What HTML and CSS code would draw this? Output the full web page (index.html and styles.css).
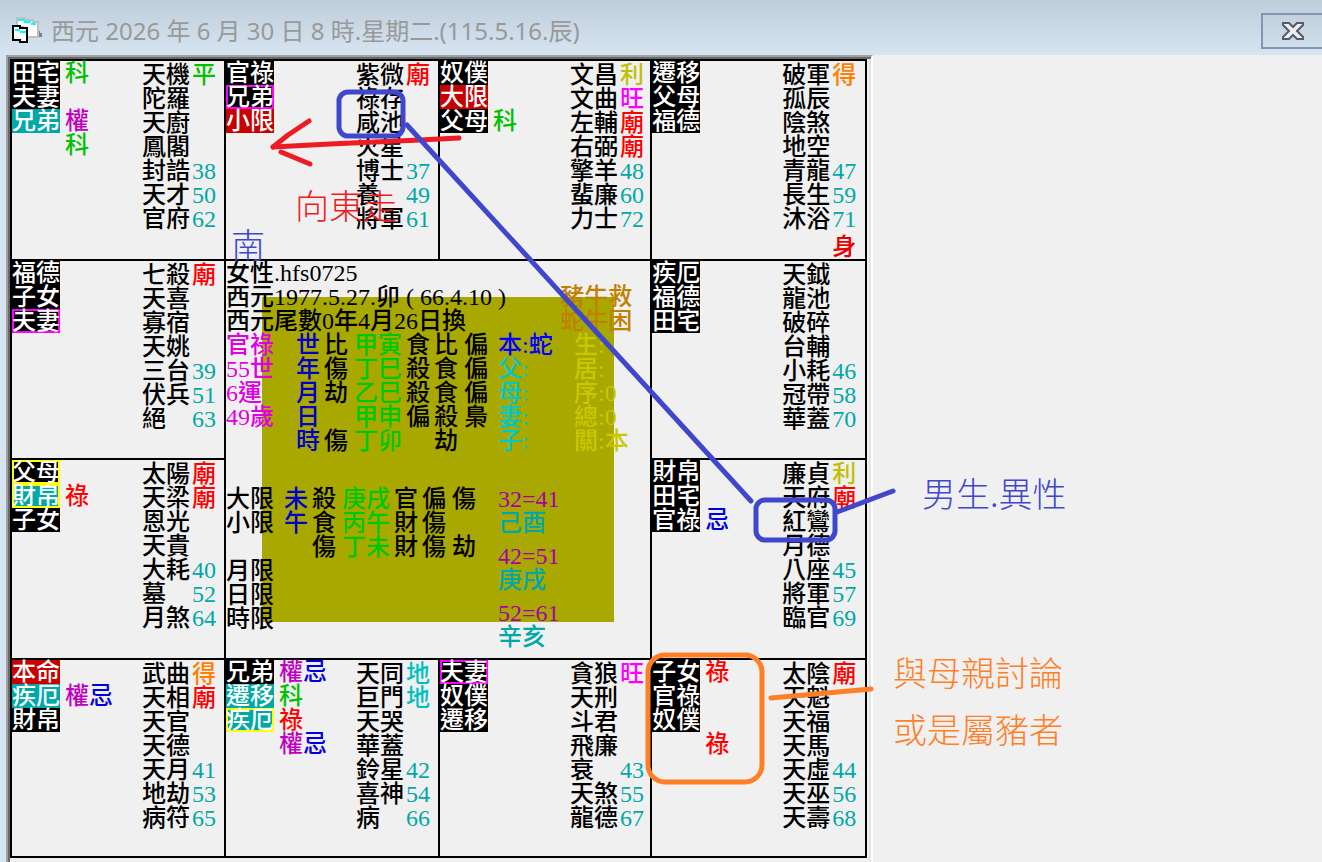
FILE: index.html
```
<!DOCTYPE html>
<html lang="zh-Hant">
<head>
  <meta charset="UTF-8">
  <title>西元 2026 年 6 月 30 日 8 時</title>
  <link rel="stylesheet" href="styles.css">
</head>
<body>

  <header class="titlebar">
    <svg class="app-icon" width="32" height="28" viewBox="0 0 32 28" shape-rendering="crispEdges">
      <path d="M26 14h3v2h2v4h-5z" fill="#808080"/>
      <path d="M6 1h8v2h8v2h5v15H12V10H6z" fill="#fff" stroke="#c0c0c0" stroke-width="2"/>
      <path d="M7 3h6M13 5h7M20 7h5" stroke="#00ffff" stroke-width="2"/>
      <path d="M2 9h7v2h7v14H9v-2H2z" fill="#fff" stroke="#000" stroke-width="2"/>
      <path d="M4 13h5M9 15h6" stroke="#00ffff" stroke-width="2"/>
    </svg>
    <h1>西元 2026 年 6 月 30 日 8 時.星期二.(115.5.16.辰)</h1>
    <button class="close" aria-label="關閉">
      <svg width="24" height="20" viewBox="0 0 24 20">
        <path d="M2 2h6l4 4 4-4h6v2l-6 6 6 6v2h-6l-4-4-4 4H2v-2l6-6-6-6z" fill="#f0f0f0" stroke="#545b6e" stroke-width="2"/>
      </svg>
    </button>
  </header>

  <main>
    <div class="frame">
      <div class="chart">

        <section class="palace">
          <ul class="tags">
            <li><b>田宅</b><span class="ke">科</span></li>
            <li><b>夫妻</b></li>
            <li><b class="teal">兄弟</b><span class="quan">權</span></li>
            <li><b class="none"></b><span class="ke">科</span></li>
          </ul>
          <ul class="stars">
            <li>天機<span class="ke">平</span></li>
            <li>陀羅</li>
            <li>天廚</li>
            <li>鳳閣</li>
            <li>封誥<span>38</span></li>
            <li>天才<span>50</span></li>
            <li>官府<span>62</span></li>
          </ul>
        </section>

        <section class="palace">
          <ul class="tags">
            <li><b>官祿</b></li>
            <li><b class="pink-line">兄弟</b></li>
            <li><b class="red">小限</b></li>
          </ul>
          <ul class="stars">
            <li>紫微<span class="miao">廟</span></li>
            <li>祿存</li>
            <li>咸池</li>
            <li>火星</li>
            <li>博士<span>37</span></li>
            <li>養<span>49</span></li>
            <li>將軍<span>61</span></li>
          </ul>
        </section>

        <section class="palace">
          <ul class="tags">
            <li><b>奴僕</b></li>
            <li><b class="red">大限</b></li>
            <li><b>父母</b><span class="ke">科</span></li>
          </ul>
          <ul class="stars">
            <li>文昌<span class="li">利</span></li>
            <li>文曲<span class="wang">旺</span></li>
            <li>左輔<span class="miao">廟</span></li>
            <li>右弼<span class="miao">廟</span></li>
            <li>擎羊<span>48</span></li>
            <li>蜚廉<span>60</span></li>
            <li>力士<span>72</span></li>
          </ul>
        </section>

        <section class="palace">
          <ul class="tags">
            <li><b>遷移</b></li>
            <li><b>父母</b></li>
            <li><b>福德</b></li>
          </ul>
          <ul class="stars">
            <li>破軍<span class="de">得</span></li>
            <li>孤辰</li>
            <li>陰煞</li>
            <li>地空</li>
            <li>青龍<span>47</span></li>
            <li>長生<span>59</span></li>
            <li>沐浴<span>71</span></li>
            <li class="body-mark"><span class="shen">身</span></li>
          </ul>
        </section>

        <section class="palace">
          <ul class="tags">
            <li><b>福德</b></li>
            <li><b>子女</b></li>
            <li><b class="pink-line">夫妻</b></li>
          </ul>
          <ul class="stars">
            <li>七殺<span class="miao">廟</span></li>
            <li>天喜</li>
            <li>寡宿</li>
            <li>天姚</li>
            <li>三台<span>39</span></li>
            <li>伏兵<span>51</span></li>
            <li>絕<span>63</span></li>
          </ul>
        </section>

        <section class="center">
          <p>女性.hfs0725</p>
          <p>西元1977.5.27.卯 ( 66.4.10 )<span class="clash">豬牛救</span></p>
          <p>西元尾數0年4月26日換<span class="clash">蛇牛困</span></p>
          <table class="pillars">
            <tr><th>官祿</th><td class="blue">世</td><td>比</td><td class="green">甲寅</td><td>食</td><td>比</td><td>偏</td><td class="self">本:蛇</td><td class="yellow">生:</td></tr>
            <tr><th>55世</th><td class="blue">年</td><td>傷</td><td class="green">丁巳</td><td>殺</td><td>食</td><td>偏</td><td class="cyan">父:</td><td class="yellow">居:</td></tr>
            <tr><th>6運</th><td class="blue">月</td><td>劫</td><td class="green">乙巳</td><td>殺</td><td>食</td><td>偏</td><td class="cyan">母:</td><td class="yellow">序:0</td></tr>
            <tr><th>49歲</th><td class="blue">日</td><td></td><td class="green">甲申</td><td>偏</td><td>殺</td><td>梟</td><td class="cyan">妻:</td><td class="yellow">總:0</td></tr>
            <tr><th></th><td class="blue">時</td><td>傷</td><td class="green">丁卯</td><td></td><td>劫</td><td></td><td class="cyan">子:</td><td class="yellow">關:本</td></tr>
          </table>
          <div class="lower">
            <table class="limits">
              <tr><th>大限</th><td class="blue">未</td><td>殺</td><td class="green">庚戌</td><td>官</td><td>偏</td><td>傷</td></tr>
              <tr><th>小限</th><td class="blue">午</td><td>食</td><td class="green">丙午</td><td>財</td><td>傷</td><td></td></tr>
              <tr><th></th><td></td><td>傷</td><td class="green">丁未</td><td>財</td><td>傷</td><td>劫</td></tr>
              <tr><th>月限</th><td colspan="6"></td></tr>
              <tr><th>日限</th><td colspan="6"></td></tr>
              <tr><th>時限</th><td colspan="6"></td></tr>
            </table>
            <dl class="decades">
              <div><dt>32=41</dt><dd>己酉</dd></div>
              <div><dt>42=51</dt><dd>庚戌</dd></div>
              <div><dt>52=61</dt><dd>辛亥</dd></div>
            </dl>
          </div>
        </section>

        <section class="palace">
          <ul class="tags">
            <li><b>疾厄</b></li>
            <li><b>福德</b></li>
            <li><b>田宅</b></li>
          </ul>
          <ul class="stars">
            <li>天鉞</li>
            <li>龍池</li>
            <li>破碎</li>
            <li>台輔</li>
            <li>小耗<span>46</span></li>
            <li>冠帶<span>58</span></li>
            <li>華蓋<span>70</span></li>
          </ul>
        </section>

        <section class="palace">
          <ul class="tags">
            <li><b class="yellow-line">父母</b></li>
            <li><b class="teal yellow-line">財帛</b><span class="lu">祿</span></li>
            <li><b>子女</b></li>
          </ul>
          <ul class="stars">
            <li>太陽<span class="miao">廟</span></li>
            <li>天梁<span class="miao">廟</span></li>
            <li>恩光</li>
            <li>天貴</li>
            <li>大耗<span>40</span></li>
            <li>墓<span>52</span></li>
            <li>月煞<span>64</span></li>
          </ul>
        </section>

        <section class="palace">
          <ul class="tags">
            <li><b>財帛</b></li>
            <li><b>田宅</b></li>
            <li><b>官祿</b><span class="ji">忌</span></li>
          </ul>
          <ul class="stars">
            <li>廉貞<span class="li">利</span></li>
            <li>天府<span class="miao">廟</span></li>
            <li>紅鸞</li>
            <li>月德</li>
            <li>八座<span>45</span></li>
            <li>將軍<span>57</span></li>
            <li>臨官<span>69</span></li>
          </ul>
        </section>

        <section class="palace">
          <ul class="tags">
            <li><b class="red">本命</b></li>
            <li><b class="teal">疾厄</b><span class="quan">權</span><span class="ji">忌</span></li>
            <li><b>財帛</b></li>
          </ul>
          <ul class="stars">
            <li>武曲<span class="de">得</span></li>
            <li>天相<span class="miao">廟</span></li>
            <li>天官</li>
            <li>天德</li>
            <li>天月<span>41</span></li>
            <li>地劫<span>53</span></li>
            <li>病符<span>65</span></li>
          </ul>
        </section>

        <section class="palace">
          <ul class="tags">
            <li><b>兄弟</b><span class="quan">權</span><span class="ji">忌</span></li>
            <li><b class="teal">遷移</b><span class="ke">科</span></li>
            <li><b class="teal yellow-line">疾厄</b><span class="lu">祿</span></li>
            <li><b class="none"></b><span class="quan">權</span><span class="ji">忌</span></li>
          </ul>
          <ul class="stars">
            <li>天同<span class="di">地</span></li>
            <li>巨門<span class="di">地</span></li>
            <li>天哭</li>
            <li>華蓋</li>
            <li>鈴星<span>42</span></li>
            <li>喜神<span>54</span></li>
            <li>病<span>66</span></li>
          </ul>
        </section>

        <section class="palace">
          <ul class="tags">
            <li><b class="pink-line">夫妻</b></li>
            <li><b>奴僕</b></li>
            <li><b>遷移</b></li>
          </ul>
          <ul class="stars">
            <li>貪狼<span class="wang">旺</span></li>
            <li>天刑</li>
            <li>斗君</li>
            <li>飛廉</li>
            <li>衰<span>43</span></li>
            <li>天煞<span>55</span></li>
            <li>龍德<span>67</span></li>
          </ul>
        </section>

        <section class="palace">
          <ul class="tags">
            <li><b>子女</b><span class="lu">祿</span></li>
            <li><b>官祿</b></li>
            <li><b>奴僕</b></li>
            <li><b class="none"></b><span class="lu">祿</span></li>
          </ul>
          <ul class="stars">
            <li>太陰<span class="miao">廟</span></li>
            <li>天魁</li>
            <li>天福</li>
            <li>天馬</li>
            <li>天虛<span>44</span></li>
            <li>天巫<span>56</span></li>
            <li>天壽<span>68</span></li>
          </ul>
        </section>

      </div>
    </div>
  </main>

  <!-- hand-drawn notes on top of the chart -->
  <svg class="notes" width="1322" height="862" viewBox="0 0 1322 862">
    <g class="pen red-pen">
      <path d="M459 138L420 140L330 144L273 147"/>
      <path d="M309 121L288 135L273 147"/>
      <path d="M281 152L310 164"/>
    </g>
    <g class="pen blue-pen">
      <rect x="339" y="92" width="64" height="44" rx="9"/>
      <path d="M407 125L450 172L751 501"/>
      <rect x="756" y="500" width="79" height="40" rx="9"/>
      <path d="M837 512L893 491"/>
    </g>
    <g class="pen orange-pen">
      <rect x="648" y="655" width="114" height="127" rx="17"/>
      <path d="M771 698L871 689"/>
    </g>
    <text class="red-note" x="295" y="219">向東走</text>
    <text class="blue-note" x="231" y="258">南</text>
    <text class="blue-note" x="922" y="507">男生.異性</text>
    <text class="orange-note" x="893" y="686">與母親討論</text>
    <text class="orange-note" x="893" y="743">或是屬豬者</text>
  </svg>

</body>
</html>
```
FILE: styles.css
```
* {
  box-sizing: border-box;
}

body {
  margin: 0;
  min-height: 100vh;
  background: #f0f0f0;
  font: 500 24px/24px "Liberation Serif", "Noto Sans CJK TC", sans-serif;
  color: #000;
  overflow-x: hidden;
}

ul, dl, dd, p, h1 {
  margin: 0;
  padding: 0;
}

ul {
  list-style: none;
}

/* title bar */
.titlebar {
  display: flex;
  align-items: center;
  height: 55px;
  padding: 6px 0 0 11px;
  background: linear-gradient(#bfccda, #d7e5f2);
}

.app-icon {
  margin-right: 8px;
}

.titlebar h1 {
  flex: 1;
  font: 24px/32px "Noto Sans", "Noto Sans CJK TC", sans-serif;
  color: #999;
}

.close {
  display: flex;
  align-items: center;
  justify-content: center;
  width: 61px;
  height: 36px;
  padding: 0;
  border: 2px solid #8793b0;
  border-right: 0;
  background: linear-gradient(#c3d0de, #d0ddea);
}

/* chart */
main {
  display: flex;
  border-left: 6px solid #d7e5f2;
  min-height: calc(100vh - 55px);
}

.frame {
  width: 65.9%;
  padding: 2px 4px 0 2px;
  border: 2px solid #a0a0a0;
  border-right-color: #fff;
  border-bottom: 0;
  box-shadow: inset 2px 2px #696969, inset -2px 0 #e3e3e3;
}

.chart {
  display: grid;
  grid-template-columns: 212fr 212fr 210fr 213fr;
  grid-template-rows: minmax(198px, auto) minmax(197px, auto) minmax(198px, auto) minmax(196px, auto);
  gap: 2px;
  padding: 2px;
  background: #000;
}

.palace {
  display: flex;
  background: #f0f0f0;
}

.tags {
  width: 130px;
}

.tags li {
  display: flex;
  height: 24px;
}

.tags b {
  width: 48px;
  margin-right: 5px;
  background: #000;
  color: #fff;
  font-weight: inherit;
}

.tags b.none {
  background: none;
}

.tags b.teal {
  background: #00a8a8;
}

.tags b.red {
  background: #c80000;
}

.pink-line {
  box-shadow: inset 0 0 0 2px #f0f;
}

.yellow-line {
  box-shadow: inset 0 0 0 2px #ff0;
}

.stars {
  padding-top: 2px;
}

.stars li {
  display: flex;
  width: 74px;
  height: 24px;
}

.stars span {
  margin-left: auto;
  color: #00a8a8;
}

.stars .body-mark {
  margin-top: 4px;
}

.tags .ke, .stars .ke { color: #00c000; }
.quan { color: #c000c0; }
.ji { color: #0000e0; }
.lu { color: #f00; }
.stars .miao { color: #f00; }
.stars .shen { color: #e80000; }
.stars .li { color: #c0c000; }
.stars .wang { color: #f0f; }
.stars .de { color: #ff8000; }
.stars .di { color: #00c0c0; }

/* middle block */
.center {
  grid-column: 2 / 4;
  grid-row: 2 / 4;
  background: linear-gradient(#a8a800, #a8a800) 36px 36px / 352px 325px no-repeat #f0f0f0;
}

.center p {
  display: flex;
  justify-content: space-between;
  padding-right: 18px;
  white-space: pre;
}

.clash { color: #c08000; }

table {
  border-spacing: 0;
  table-layout: fixed;
}

th, td {
  height: 24px;
  padding: 0;
  font-weight: inherit;
  text-align: left;
  white-space: nowrap;
}

.pillars { width: 424px; }
.pillars th { width: 70px; color: #e000e0; }
.pillars td { width: 28px; }
.pillars td:nth-child(3), .pillars td:nth-child(6) { width: 30px; }
.pillars td:nth-child(4) { width: 52px; }
.pillars td:nth-child(7) { width: 34px; }
.pillars td:nth-child(8) { width: 76px; }
.pillars td:nth-child(9) { width: 76px; }

.blue { color: #0000c8; }
.green { color: #00c800; }
.self { color: #00f; }
.cyan { color: #00c8c8; }
.yellow { color: #c8c800; }

.lower {
  display: flex;
  align-items: flex-start;
  margin-top: 34px;
}

.limits { width: 272px; }
.limits th { width: 58px; }
.limits td { width: 28px; }
.limits td:nth-child(3), .limits td:nth-child(6) { width: 30px; }
.limits td:nth-child(4) { width: 52px; }
.limits td:nth-child(7) { width: 46px; }

.decades {
  display: grid;
  gap: 9px;
}

.decades dt { color: #a800a8; }
.decades dd { color: #00a8a8; }

/* pen notes */
.notes {
  position: absolute;
  top: 0;
  left: 0;
  pointer-events: none;
  font: 300 34px "Noto Sans CJK TC", sans-serif;
}

.pen {
  fill: none;
  stroke-width: 5;
  stroke-linecap: round;
  stroke-linejoin: round;
}

.red-pen { stroke: #ed1c24; }
.blue-pen { stroke: #3f48cc; }
.orange-pen { stroke: #ff7f27; }
.red-note { fill: #ed1c24; }
.blue-note { fill: #3f48cc; }
.orange-note { fill: #ff7f27; }
```
